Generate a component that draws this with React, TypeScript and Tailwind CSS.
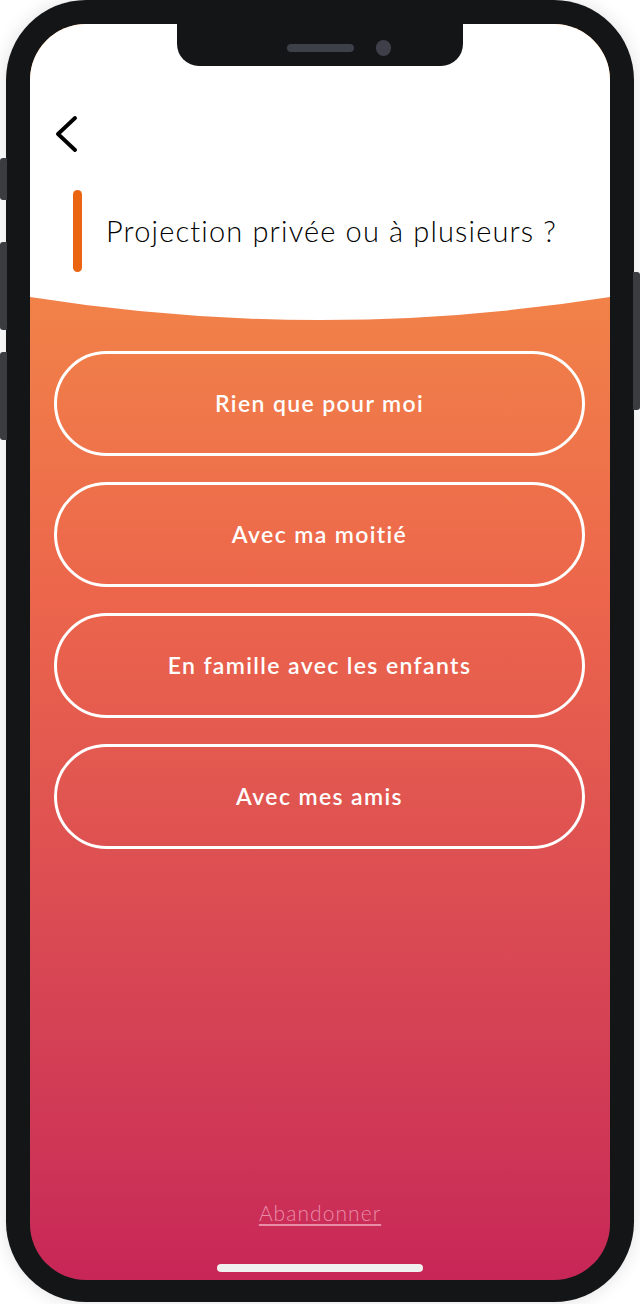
const choices = ['Rien que pour moi', 'Avec ma moitié', 'En famille avec les enfants', 'Avec mes amis'];

const font = { fontFamily: 'Lato, "Open Sans", sans-serif' };

const App = () => (
  <div className="relative h-[1304px] w-[640px] overflow-hidden bg-white" style={font}>
    {/* side buttons */}
    <div className="absolute left-0 top-[158px] h-[42px] w-[7px] rounded-l-[3px] bg-[#3b3c3f]" />
    <div className="absolute left-0 top-[242px] h-[88px] w-[7px] rounded-l-[3px] bg-[#3b3c3f]" />
    <div className="absolute left-0 top-[352px] h-[88px] w-[7px] rounded-l-[3px] bg-[#3b3c3f]" />
    <div className="absolute right-0 top-[272px] h-[138px] w-[7px] rounded-r-[3px] bg-[#3b3c3f]" />

    <div className="mx-auto h-[1302px] w-[628px] rounded-[80px] bg-[#141517] px-[24px] pt-[24px] shadow-[0_0_18px_rgba(0,0,0,0.12)]">
      <div className="relative flex h-[1256px] w-[580px] flex-col overflow-hidden rounded-[56px] bg-gradient-to-b from-[#f59a45] via-[#ec664b] via-45% to-[#c72657]">
        {/* notch */}
        <div className="absolute left-[147px] top-0 z-10 flex h-[42px] w-[286px] items-center justify-center gap-[22px] rounded-b-[22px] bg-[#141517] pt-[6px]">
          <div className="ml-[38px] h-[8px] w-[67px] rounded-full bg-[#3d4049]" />
          <div className="h-[16px] w-[15px] rounded-full bg-[#3d4049]" />
        </div>

        {/* header */}
        <div className="relative bg-white">
          <div className="pl-[24px] pt-[92px]">
            <svg width="24" height="36" viewBox="0 0 24 36" className="block">
              <path d="M21 2 L4 18 L21 34" fill="none" stroke="#000" strokeWidth="3.8" strokeLinecap="round" strokeLinejoin="round" />
            </svg>
          </div>
          <div className="mt-[38px] flex items-center pl-[43px]">
            <div className="h-[82px] w-[9px] rounded-full bg-[#ea6412]" />
            <h1 className="ml-[24px] text-[29px] font-light tracking-[0.04em] text-black">
              Projection privée ou à plusieurs ?
            </h1>
          </div>
          <div className="h-[25px]" />
          <svg className="absolute left-0 top-full block" width="580" height="24" viewBox="0 0 580 24">
            <path d="M0 0 H580 Q290 46 0 0 Z" fill="#fff" />
          </svg>
        </div>

        {/* choices */}
        <div className="mt-[54px] flex flex-col gap-[26px] px-[24px]">
          {choices.map((c) => (
            <button
              key={c}
              className="flex h-[105px] w-[531px] items-center justify-center rounded-full border-[3px] border-white text-[23px] font-semibold tracking-[0.06em] text-white"
            >
              {c}
            </button>
          ))}
        </div>

        <div className="mt-auto flex flex-col items-center pb-[8px]">
          <a className="text-[21px] font-light tracking-[0.05em] text-[#e98ca8] underline underline-offset-[3px]">Abandonner</a>
          <div className="mt-[36px] h-[8px] w-[206px] rounded-full bg-[#f0f0f0]" />
        </div>
      </div>
    </div>
  </div>
);

export default App;
